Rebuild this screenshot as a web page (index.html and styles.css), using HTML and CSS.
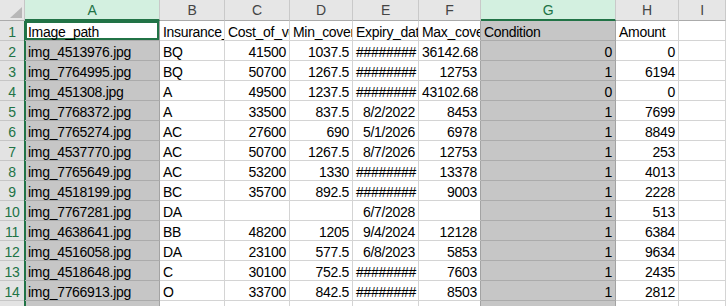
FILE: index.html
```html
<!DOCTYPE html>
<html lang="en">
<head>
  <meta charset="UTF-8">
  <meta name="viewport" content="width=device-width, initial-scale=1.0">
  <title>sheet</title>
  <link rel="stylesheet" href="styles.css">
</head>
<body>
  <div class="sheet" id="sheet"></div>

  <script>
    const $ = s => document.querySelector(s)

    const letters = ['A', 'B', 'C', 'D', 'E', 'F', 'G', 'H', 'I']
    const selected = ['A', 'G']
    const H = '########'

    const rows = [
      ['Image_path', 'Insurance_company', 'Cost_of_vehicle', 'Min_coverage', 'Expiry_date', 'Max_coverage', 'Condition', 'Amount'],
      ['img_4513976.jpg', 'BQ', 41500, 1037.5, H, 36142.68, 0, 0],
      ['img_7764995.jpg', 'BQ', 50700, 1267.5, H, 12753, 1, 6194],
      ['img_451308.jpg', 'A', 49500, 1237.5, H, 43102.68, 0, 0],
      ['img_7768372.jpg', 'A', 33500, 837.5, '8/2/2022', 8453, 1, 7699],
      ['img_7765274.jpg', 'AC', 27600, 690, '5/1/2026', 6978, 1, 8849],
      ['img_4537770.jpg', 'AC', 50700, 1267.5, '8/7/2026', 12753, 1, 253],
      ['img_7765649.jpg', 'AC', 53200, 1330, H, 13378, 1, 4013],
      ['img_4518199.jpg', 'BC', 35700, 892.5, H, 9003, 1, 2228],
      ['img_7767281.jpg', 'DA', '', '', '6/7/2028', '', 1, 513],
      ['img_4638641.jpg', 'BB', 48200, 1205, '9/4/2024', 12128, 1, 6384],
      ['img_4516058.jpg', 'DA', 23100, 577.5, '6/8/2023', 5853, 1, 9634],
      ['img_4518648.jpg', 'C', 30100, 752.5, H, 7603, 1, 2435],
      ['img_7766913.jpg', 'O', 33700, 842.5, H, 8503, 1, 2812],
      []
    ]

    const isRight = v => typeof v === 'number' || /^[#\d]/.test(v)

    let html = '<div class="corner"><svg width="24" height="20" viewBox="0 0 24 20"><polygon points="22,7 22,18 10,18" fill="#b7b7b7"/></svg></div>'

    letters.forEach(l => {
      let cls = 'col-head'
      if (selected.includes(l)) cls += ' active'
      html += `<div class="${cls}">${l}</div>`
    })

    rows.forEach((row, r) => {
      html += `<div class="row-head">${r + 1}</div>`
      letters.forEach((l, c) => {
        let v = row[c] === undefined ? '' : row[c]
        let cls = 'cell'
        if (r > 0 && isRight(v)) cls += ' num'
        if (selected.includes(l)) cls += ' sel'
        if (l === 'F') cls += ' edge'
        if (l === 'A') cls += ' col-a'
        if (l === 'A' && r === 0) cls += ' current'
        html += `<div class="${cls}">${v}</div>`
      })
    })

    $('#sheet').innerHTML = html
  </script>
</body>
</html>
```

FILE: styles.css
```css
html, body {
  margin: 0;
  padding: 0;
  background: #fff;
  overflow: hidden;
}

.sheet {
  display: grid;
  grid-template-columns: 25px 135px 65px 65px 63px 66px 62px 135px 63px 1fr;
  grid-template-rows: 21px;
  grid-auto-rows: 20px;
  width: 726px;
  height: 306px;
  overflow: hidden;
  font-family: "Liberation Sans", Arial, sans-serif;
  font-size: 14px;
  letter-spacing: -0.3px;
  color: #000;
}

.sheet > div {
  box-sizing: border-box;
  overflow: hidden;
  white-space: nowrap;
}

.corner {
  background: #e6e6e6;
  border-right: 1px solid #c6c6c6;
  border-bottom: 1px solid #ababab;
}

.corner svg {
  display: block;
}

.col-head {
  background: #e6e6e6;
  border-right: 1px solid #c9c9c9;
  border-bottom: 1px solid #ababab;
  color: #444;
  text-align: center;
  line-height: 20px;
}

.col-head.active {
  background: #d3f0e0;
  color: #217346;
  border-bottom: 2px solid #217346;
}

.row-head {
  background: #e3e3e3;
  border-right: 1px solid #c6c6c6;
  border-bottom: 1px solid #c6c6c6;
  color: #217346;
  text-align: center;
  padding-top: 2px;
  line-height: 18px;
}

.cell {
  border-right: 1px solid #d4d4d4;
  border-bottom: 1px solid #d4d4d4;
  padding: 2px 3px 0;
  line-height: 18px;
}

.cell.num {
  text-align: right;
}

.cell.sel {
  background: #c6c6c6;
  border-right-color: #a3a3a3;
  border-bottom-color: #ababab;
}

.cell.edge {
  border-right-color: #a3a3a3;
}

/* left edge of the selection */
.cell.col-a {
  box-shadow: -1px 0 0 #217346, inset 1px 0 0 #217346;
}

.cell.current {
  background: #fff;
  box-shadow: -1px 0 0 #217346, inset 0 0 0 2px #217346;
}
```
